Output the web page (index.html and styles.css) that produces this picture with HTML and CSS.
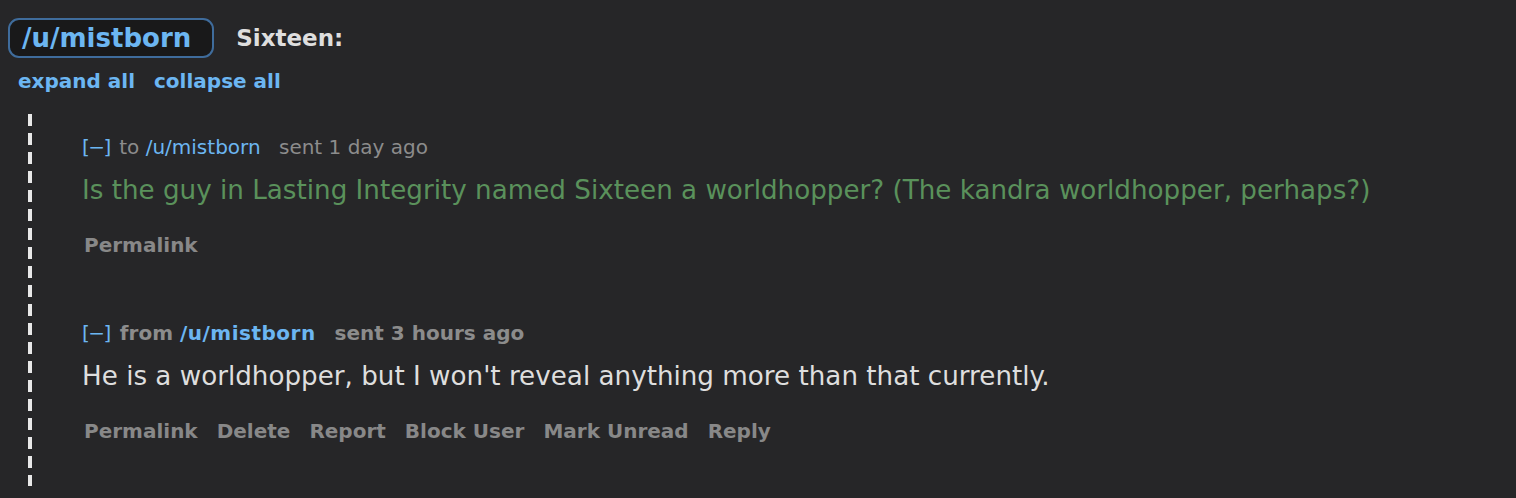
FILE: index.html
```html
<!DOCTYPE html>
<html lang="en">
<head>
    <meta charset="UTF-8">
    <title>Messages</title>
    <link rel="stylesheet" href="styles.css">
</head>
<body>
    <div class="thread">
        <div class="thread-head">
            <a class="user-bubble">/u/mistborn</a>
            <span class="subject">Sixteen:</span>
        </div>
        <div class="thread-tools">
            <a>expand all</a>
            <a>collapse all</a>
        </div>

        <div class="messages">
            <div class="message">
                <div class="tagline">
                    <a class="toggle">[&minus;]</a> to <a class="author">/u/mistborn</a>
                    <span class="time">sent 1 day ago</span>
                </div>
                <div class="body sent">Is the guy in Lasting Integrity named Sixteen a worldhopper? (The kandra worldhopper, perhaps?)</div>
                <ul class="buttons">
                    <li>Permalink</li>
                </ul>
            </div>

            <div class="message">
                <div class="tagline bold">
                    <a class="toggle">[&minus;]</a> from <a class="author">/u/mistborn</a>
                    <span class="time">sent 3 hours ago</span>
                </div>
                <div class="body">He is a worldhopper, but I won't reveal anything more than that currently.</div>
                <ul class="buttons">
                    <li>Permalink</li>
                    <li>Delete</li>
                    <li>Report</li>
                    <li>Block User</li>
                    <li>Mark Unread</li>
                    <li>Reply</li>
                </ul>
            </div>
        </div>
    </div>
</body>
</html>
```

FILE: styles.css
```css
body {
    margin: 0;
    background: #262628;
    font-family: "DejaVu Sans", Verdana, sans-serif;
    color: #dedede;
}

a {
    color: #6cb6f2;
    text-decoration: none;
}

.thread {
    padding: 18px 8px 0 8px;
}

.thread-head {
    display: flex;
    align-items: center;
    gap: 22px;
}

.user-bubble {
    display: inline-block;
    height: 36px;
    line-height: 36px;
    padding: 0 21px 0 12px;
    border: 2px solid #3f6c9c;
    border-radius: 11px;
    background: #19191a;
    font-size: 26px;
    font-weight: bold;
}

.subject {
    font-size: 23px;
    font-weight: bold;
    color: #dedede;
}

.thread-tools {
    display: flex;
    gap: 19px;
    margin-top: 11px;
    padding-left: 10px;
    font-size: 20px;
    line-height: 24px;
    font-weight: bold;
}

/* dashed rule down the left of the thread */
.messages {
    margin: 21px 0 0 20px;
    padding-left: 54px;
    background: repeating-linear-gradient(to bottom, #e8e8e8 0 12px, transparent 12px 19px) left top / 4px 100% no-repeat;
}

.message {
    padding: 19px 0 43px 0;
}

.tagline {
    font-size: 20px;
    line-height: 28px;
    color: #8c8c8c;
}

.tagline.bold {
    font-weight: bold;
}

.tagline.bold .author {
    letter-spacing: 0.5px;
}

.toggle {
    font-weight: normal;
    letter-spacing: -1.5px;
    margin-right: 3px;
}

.time {
    margin-left: 12px;
}

.body {
    margin-top: 13px;
    font-size: 26.2px;
    line-height: 32px;
}

.body.sent {
    color: #5a915b;
}

.buttons {
    display: flex;
    gap: 19px;
    list-style: none;
    margin: 27px 0 0 2px;
    padding: 0;
    font-size: 20px;
    line-height: 24px;
    font-weight: bold;
    color: #888888;
}
```
